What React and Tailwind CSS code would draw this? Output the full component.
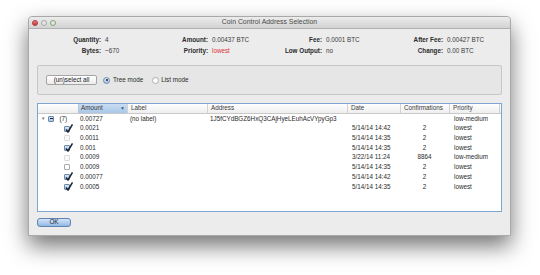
import React from "react"

const rows = [
  { amount: "0.0021", checked: true, date: "5/14/14 14:42", conf: "2", prio: "lowest" },
  { amount: "0.0011", checked: false, faint: true, date: "5/14/14 14:35", conf: "2", prio: "lowest" },
  { amount: "0.001", checked: true, date: "5/14/14 14:35", conf: "2", prio: "lowest" },
  { amount: "0.0009", checked: false, faint: true, date: "3/22/14 11:24", conf: "8864", prio: "low-medium" },
  { amount: "0.0009", checked: false, date: "5/14/14 14:35", conf: "2", prio: "lowest" },
  { amount: "0.00077", checked: true, date: "5/14/14 14:42", conf: "2", prio: "lowest" },
  { amount: "0.0005", checked: true, date: "5/14/14 14:35", conf: "2", prio: "lowest" },
]

function CheckBox({ checked, faint }) {
  return (
    <span
      className={`relative inline-block w-[6px] h-[6px] rounded-[1px] border ${
        checked
          ? "border-[#6b86a8] bg-gradient-to-b from-[#dbe8f6] to-[#a9c3e2]"
          : faint
          ? "border-[#dcdcdc] bg-[#fafafa]"
          : "border-[#a8a8a8] bg-white"
      }`}
    >
      {checked && (
        <svg className="absolute -top-[3px] left-0 w-[8px] h-[9px]" viewBox="0 0 8 9">
          <path d="M1 5.5 L3 8 L7.5 0.5" fill="none" stroke="#1b2233" strokeWidth="1.5" />
        </svg>
      )}
    </span>
  )
}

function Summary({ label, value, lw, vw, red }) {
  return (
    <>
      <span className={`${lw} text-right font-bold text-[#2a2a2a]`}>{label}</span>
      <span className={`${vw} pl-[4px] ${red ? "text-[#e0313b]" : "text-[#3a3a3a]"}`}>{value}</span>
    </>
  )
}

export default function App() {
  return (
    <div className="w-[540px] h-[275px] bg-white pt-[16px] pl-[28px] font-['Liberation_Sans',Arial,sans-serif] overflow-hidden">
      <div className="w-[483px] h-[220px] flex flex-col rounded-t-[4px] border border-[#a9a9a9] shadow-[0_10px_22px_rgba(0,0,0,0.55)] bg-[#ececec]">
        {/* title bar */}
        <div className="relative h-[12px] flex items-center justify-center rounded-t-[4px] bg-gradient-to-b from-[#ececec] to-[#d2d2d2] border-b border-[#b1b1b1]">
          <div className="absolute left-[3px] top-[3px] flex gap-[3px]">
            <span className="w-[6px] h-[6px] rounded-full bg-gradient-to-b from-[#f27a7a] to-[#c8363a] border border-[#a63a3a]" />
            <span className="w-[6px] h-[6px] rounded-full bg-[#e4e4e4] border border-[#a8a8a8]" />
            <span className="w-[6px] h-[6px] rounded-full bg-[#e4e4e4] border border-[#7fa86a]" />
          </div>
          <span className="text-[6.9px] text-[#4a4a4a] leading-none">Coin Control Address Selection</span>
        </div>

        <div className="flex-1 px-[8px] flex flex-col text-[6.3px] leading-none">
          {/* summary */}
          <div className="pt-[6px] pl-[17px]">
            <div className="flex h-[11px] items-center">
              <Summary label="Quantity:" value="4" lw="w-[47px]" vw="w-[60px]" />
              <Summary label="Amount:" value="0.00437 BTC" lw="w-[47px]" vw="w-[67px]" />
              <Summary label="Fee:" value="0.0001 BTC" lw="w-[47px]" vw="w-[74px]" />
              <Summary label="After Fee:" value="0.00427 BTC" lw="w-[47px]" vw="w-[56px]" />
            </div>
            <div className="flex h-[11px] items-center">
              <Summary label="Bytes:" value="~670" lw="w-[47px]" vw="w-[60px]" />
              <Summary label="Priority:" value="lowest" lw="w-[47px]" vw="w-[67px]" red />
              <Summary label="Low Output:" value="no" lw="w-[47px]" vw="w-[74px]" />
              <Summary label="Change:" value="0.00 BTC" lw="w-[47px]" vw="w-[56px]" />
            </div>
          </div>

          {/* mode group */}
          <div className="mt-[8px] h-[30px] flex items-center px-[8px] border border-[#c6c6c6] rounded-[2px] bg-[#e6e6e6]">
            <button className="w-[51px] h-[10px] px-0 whitespace-nowrap rounded-[2px] border border-[#a5a5a5] bg-gradient-to-b from-white to-[#ececec] text-[#222] text-[6.3px] leading-none">
              (un)select all
            </button>
            <span className="ml-[6px] w-[7px] h-[7px] rounded-full border border-[#6d8ab0] bg-gradient-to-b from-[#dbe8f6] to-[#a8c2e2] flex items-center justify-center">
              <span className="w-[2px] h-[2px] rounded-full bg-[#1d2433]" />
            </span>
            <span className="ml-[3px] text-[#2a2a2a]">Tree mode</span>
            <span className="ml-[9px] w-[7px] h-[7px] rounded-full border border-[#ababab] bg-white" />
            <span className="ml-[2px] text-[#2a2a2a]">List mode</span>
          </div>

          {/* tree */}
          <div className="mt-[8px] h-[109px] border border-[#7fa6d3] bg-white overflow-hidden">
            <div className="flex h-[10px] items-center bg-gradient-to-b from-white to-[#eeeeee] border-b border-[#c9c9c9] text-[#3a3a3a]">
              <span className="w-[40px] h-full" />
              <span className="w-[49px] h-full flex items-center justify-between px-[2px] bg-gradient-to-b from-[#c9ddf2] to-[#a9c7e8] border-l border-[#b3c6dc]">
                Amount
                <span className="text-[5px] text-[#3d5f8e]">▼</span>
              </span>
              <span className="w-[80px] h-full flex items-center pl-[3px] border-l border-[#d3d3d3]">Label</span>
              <span className="w-[140px] h-full flex items-center pl-[3px] border-l border-[#d3d3d3]">Address</span>
              <span className="w-[53px] h-full flex items-center pl-[3px] border-l border-[#d3d3d3]">Date</span>
              <span className="w-[49px] h-full flex items-center pl-[3px] border-l border-[#d3d3d3]">Confirmations</span>
              <span className="w-[51px] h-full flex items-center pl-[3px] border-l border-[#d3d3d3] border-r">Priority</span>
            </div>

            <div className="text-[#2a2a2a]">
              <div className="flex h-[9.7px] items-center">
                <span className="w-[40px] flex items-center pl-[3px]">
                  <span className="text-[4.5px] text-[#777]">▼</span>
                  <span className="ml-[3px] w-[6px] h-[6px] rounded-[1px] border border-[#6b86a8] bg-gradient-to-b from-[#dbe8f6] to-[#a9c3e2] flex items-center justify-center">
                    <span className="w-[3px] h-[1px] bg-[#1b2233]" />
                  </span>
                  <span className="ml-[5px]">(7)</span>
                </span>
                <span className="w-[49px] pl-[2px]">0.00727</span>
                <span className="w-[80px] pl-[3px]">(no label)</span>
                <span className="w-[140px] pl-[3px]">1J5fCYdBGZ6HxQ3CAjHyeLEuhAcVYpyGp3</span>
                <span className="w-[53px]" />
                <span className="w-[49px]" />
                <span className="w-[51px] pl-[5px]">low-medium</span>
              </div>
              {rows.map((r, i) => (
                <div key={i} className="flex h-[9.7px] items-center">
                  <span className="w-[40px] pl-[26px] flex items-center">
                    <CheckBox checked={r.checked} faint={r.faint} />
                  </span>
                  <span className="w-[49px] pl-[2px]">{r.amount}</span>
                  <span className="w-[80px]" />
                  <span className="w-[140px]" />
                  <span className="w-[53px] pl-[5px]">{r.date}</span>
                  <span className="w-[49px] text-center">{r.conf}</span>
                  <span className="w-[51px] pl-[5px]">{r.prio}</span>
                </div>
              ))}
            </div>
          </div>

          <div className="mt-[6px]">
            <button className="w-[34px] h-[9px] rounded-[3px] border border-[#5f84b3] bg-gradient-to-b from-[#d3e4f7] to-[#93b8e3] text-[6.3px] leading-none text-[#1b2233]">
              OK
            </button>
          </div>
        </div>
      </div>
    </div>
  )
}
